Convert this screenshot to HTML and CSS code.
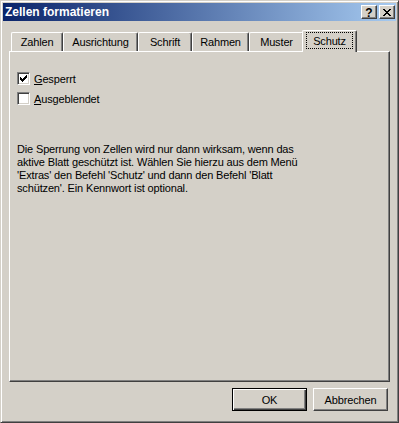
FILE: index.html
```html
<!DOCTYPE html>
<html lang="de">
<head>
    <meta charset="UTF-8">
    <title>Zellen formatieren</title>
    <link rel="stylesheet" href="styles.css">
</head>
<body>
    <div class="window">
        <div class="titlebar">
            <span class="title">Zellen formatieren</span>
            <div class="caption-buttons">
                <span class="caption-btn help">?</span>
                <span class="caption-btn">
                    <svg width="8" height="7" viewBox="0 0 8 7" shape-rendering="crispEdges">
                        <path d="M0 0h2v1h-2z M6 0h2v1h-2z M1 1h2v1h-2z M5 1h2v1h-2z M2 2h4v1h-4z M3 3h2v1h-2z M2 4h4v1h-4z M1 5h2v1h-2z M5 5h2v1h-2z M0 6h2v1h-2z M6 6h2v1h-2z" fill="#000"/>
                    </svg>
                </span>
            </div>
        </div>

        <div class="dialog-body">
            <!-- Tabs -->
            <div class="tabs">
                <div class="tab tab-zahlen">Zahlen</div>
                <div class="tab tab-ausrichtung">Ausrichtung</div>
                <div class="tab tab-schrift">Schrift</div>
                <div class="tab tab-rahmen">Rahmen</div>
                <div class="tab tab-muster">Muster</div>
                <div class="tab tab-schutz active"><span class="focus">Schutz</span></div>
            </div>

            <div class="panel">
                <div class="check">
                    <span class="box">
                        <svg width="7" height="7" viewBox="0 0 7 7" shape-rendering="crispEdges">
                            <path d="M0 2h1v3h-1z M1 3h1v3h-1z M2 4h1v3h-1z M3 3h1v3h-1z M4 2h1v3h-1z M5 1h1v3h-1z M6 0h1v3h-1z" fill="#000"/>
                        </svg>
                    </span>
                    <span><u>G</u>esperrt</span>
                </div>
                <div class="check">
                    <span class="box"></span>
                    <span><u>A</u>usgeblendet</span>
                </div>

                <p class="note">
                    Die Sperrung von Zellen wird nur dann wirksam, wenn das<br>
                    aktive Blatt geschützt ist. Wählen Sie hierzu aus dem Menü<br>
                    'Extras' den Befehl 'Schutz' und dann den Befehl 'Blatt<br>
                    schützen'. Ein Kennwort ist optional.
                </p>
            </div>

            <div class="buttons">
                <button class="btn default">OK</button>
                <button class="btn">Abbrechen</button>
            </div>
        </div>
    </div>
</body>
</html>
```

FILE: styles.css
```css
body {
    margin: 0;
    font-family: "Liberation Sans", Arial, sans-serif;
    font-size: 11px;
    letter-spacing: -0.15px;
    color: #000;
    background-color: #d4d0c8;
}

.window {
    width: 399px;
    height: 423px;
    box-sizing: border-box;
    padding: 2px;
    background-color: #d4d0c8;
    border: 1px solid;
    border-color: #d4d0c8 #404040 #404040 #d4d0c8;
    box-shadow: inset 1px 1px #fff, inset -1px -1px #808080;
    display: flex;
    flex-direction: column;
}

.titlebar {
    height: 18px;
    display: flex;
    align-items: center;
    justify-content: space-between;
    padding-left: 2px;
    background: linear-gradient(to right, #0a246a, #a6caf0);
}

.title {
    color: #fff;
    font-weight: bold;
    font-size: 12px;
    letter-spacing: 0;
}

.caption-buttons {
    display: flex;
    gap: 2px;
    margin-right: 1px;
}

.caption-btn {
    width: 16px;
    height: 14px;
    box-sizing: border-box;
    display: flex;
    align-items: center;
    justify-content: center;
    background-color: #d4d0c8;
    border: 1px solid;
    border-color: #fff #404040 #404040 #fff;
    box-shadow: inset -1px -1px #808080;
}

.caption-btn.help {
    font-weight: bold;
    font-size: 12px;
    line-height: 12px;
    padding-top: 1px;
    letter-spacing: 0;
}

.dialog-body {
    flex: 1;
    display: flex;
    flex-direction: column;
    padding: 9px 6px 9px 6px;
}

/* tab strip */
.tabs {
    height: 21px;
    display: flex;
    align-items: flex-end;
    padding-left: 2px;
    position: relative;
    z-index: 1;
}

.tab {
    height: 19px;
    box-sizing: border-box;
    display: flex;
    align-items: center;
    justify-content: center;
    background-color: #d4d0c8;
    border-top: 1px solid #fff;
    border-left: 1px solid #fff;
    border-right: 1px solid #404040;
    border-radius: 2px 2px 0 0;
    box-shadow: inset -1px 0 #808080;
}

.tab-zahlen { width: 52px; }
.tab-ausrichtung { width: 75px; }
.tab-schrift { width: 54px; }
.tab-rahmen { width: 57px; }
.tab-muster { width: 55px; }

.tab.active {
    width: 55px;
    height: 22px;
    margin-left: -2px;
    margin-bottom: -1px;
    padding-bottom: 2px;
    position: relative;
    z-index: 2;
}

.focus {
    width: 47px;
    height: 17px;
    box-sizing: border-box;
    display: flex;
    align-items: center;
    justify-content: center;
    border: 1px dotted #000;
}

.panel {
    flex: 1;
    border: 1px solid;
    border-color: #fff #404040 #404040 #fff;
    box-shadow: inset -1px -1px #808080;
    padding: 20px 7px 0 7px;
}

.check {
    display: flex;
    align-items: center;
    gap: 4px;
    height: 13px;
}

.check + .check {
    margin-top: 7px;
}

.box {
    width: 13px;
    height: 13px;
    box-sizing: border-box;
    background-color: #fff;
    border: 1px solid;
    border-color: #808080 #fff #fff #808080;
    box-shadow: inset 1px 1px #404040, inset -1px -1px #d4d0c8;
    display: flex;
    padding: 2px 0 0 2px;
}

.note {
    margin: 38px 0 0 0;
    line-height: 13px;
}

.buttons {
    display: flex;
    justify-content: flex-end;
    gap: 6px;
    margin-top: 6px;
    padding-right: 2px;
}

.btn {
    width: 75px;
    height: 23px;
    font-family: "Liberation Sans", Arial, sans-serif;
    font-size: 11px;
    letter-spacing: -0.15px;
    color: #000;
    background-color: #d4d0c8;
    border: 1px solid;
    border-color: #fff #404040 #404040 #fff;
    box-shadow: inset -1px -1px #808080;
    padding: 0;
}

.btn.default {
    border-color: #000;
    box-shadow: inset 1px 1px #fff, inset -1px -1px #404040, inset -2px -2px #808080;
}
```
